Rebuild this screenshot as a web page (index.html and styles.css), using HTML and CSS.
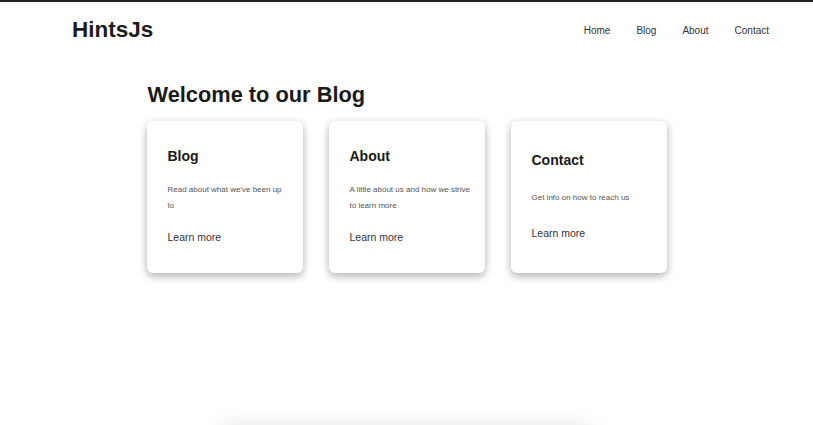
FILE: index.html
```html
<!DOCTYPE html>
<html lang="en">
<head>
<meta charset="utf-8">
<title>HintsJs</title>
<link rel="stylesheet" href="styles.css">
</head>
<body>
<header class="site-header">
  <div class="logo">HintsJs</div>
  <nav class="nav">
    <a href="#">Home</a>
    <a href="#">Blog</a>
    <a href="#">About</a>
    <a href="#">Contact</a>
  </nav>
</header>
<main class="main">
  <h1 class="page-title">Welcome to our Blog</h1>
  <div class="cards">
    <div class="card">
      <h2 class="card-title">Blog</h2>
      <p class="card-text">Read about what we've been up to</p>
      <a class="card-link" href="#">Learn more</a>
    </div>
    <div class="card">
      <h2 class="card-title">About</h2>
      <p class="card-text">A little about us and how we strive to learn more</p>
      <a class="card-link" href="#">Learn more</a>
    </div>
    <div class="card">
      <h2 class="card-title">Contact</h2>
      <p class="card-text">Get info on how to reach us</p>
      <a class="card-link" href="#">Learn more</a>
    </div>
  </div>
</main>
<section class="below"></section>
</body>
</html>
```
FILE: styles.css
```css
* { box-sizing: border-box; }
html, body { margin: 0; padding: 0; }
body {
  font-family: "Liberation Sans", Arial, sans-serif;
  color: #1a1a1a;
  background: #fff;
  border-top: 2px solid #222;
  overflow: hidden;
}
.site-header {
  height: 56px;
  display: flex;
  align-items: center;
  justify-content: space-between;
  padding: 0 44px 0 72px;
}
.logo {
  font-size: 22.5px;
  font-weight: bold;
  color: #1c1c1c;
}
.nav {
  display: flex;
  gap: 26px;
}
.nav a {
  font-size: 10px;
  color: #333;
  text-decoration: none;
}
.main {
  width: 520px;
  margin: 0 auto;
}
.page-title {
  font-size: 21.8px;
  font-weight: bold;
  margin: 25px 0 14px 1px;
  line-height: 24px;
  color: #1a1a1a;
}
.cards {
  display: grid;
  grid-template-columns: repeat(3, 156px);
  gap: 26px;
}
.card {
  height: 152px;
  border-radius: 6px;
  background: #fff;
  box-shadow: 0 3px 8px rgba(0,0,0,0.32);
  padding: 11px 14.5px 13px 21px;
  display: flex;
  flex-direction: column;
  justify-content: space-evenly;
}
.card-title {
  font-size: 14px;
  font-weight: bold;
  margin: 0;
  line-height: 17px;
  color: #1a1a1a;
}
.card-text {
  font-size: 8px;
  line-height: 16px;
  color: #555;
  margin: 0;
}
.card-link {
  font-size: 10.5px;
  line-height: 14px;
  color: #333;
  text-decoration: none;
}
.below {
  width: 370px;
  height: 100px;
  margin: 157px auto 0;
  background: #fff;
  box-shadow: 0 0 22px rgba(0,0,0,0.16);
}
```
